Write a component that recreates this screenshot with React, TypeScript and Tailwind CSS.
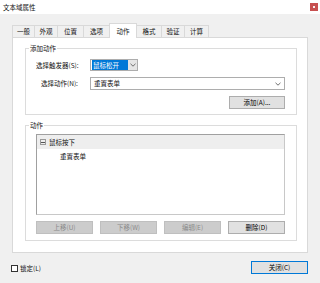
import React from "react";

const font = { fontFamily: '"Noto Sans CJK SC", "Noto Sans", sans-serif' };

const tabs: { label: string; w: string; active?: boolean }[] = [
  { label: "一般", w: "w-[23px]" },
  { label: "外观", w: "w-[24px]" },
  { label: "位置", w: "w-[27px]" },
  { label: "选项", w: "w-[27px]" },
  { label: "动作", w: "w-[28px]", active: true },
  { label: "格式", w: "w-[26px]" },
  { label: "验证", w: "w-[24px]" },
  { label: "计算", w: "w-[25px]" },
];

function Btn({ label, disabled, primary, w = "w-[57px]" }: { label: string; disabled?: boolean; primary?: boolean; w?: string }) {
  const cls = disabled
    ? "bg-[#cccccc] border-[#bfbfbf] text-[#8a8a8a]"
    : primary
    ? "bg-[#e1e1e1] border-[#0078d7] text-black"
    : "bg-[#e1e1e1] border-[#adadad] text-black";
  return (
    <div className={`${w} h-[13px] border flex items-center justify-center text-[6.5px] leading-none ${cls}`}>
      {label}
    </div>
  );
}

function Chevron() {
  return (
    <svg width="6" height="4" viewBox="0 0 6 4">
      <path d="M0.5 0.8 L3 3.2 L5.5 0.8" fill="none" stroke="#606060" strokeWidth="0.9" />
    </svg>
  );
}

export default function App() {
  return (
    <div className="w-[320px] h-[283px] bg-[#f0f0f0] flex flex-col overflow-hidden text-[#111]" style={font}>
      {/* title bar */}
      <div className="h-[14px] bg-white flex items-center justify-between pl-[3px] pr-[2px] shrink-0">
        <span className="text-[6.5px] leading-none">文本域属性</span>
        <div className="w-[8px] h-[8px] bg-[#c75050] flex items-center justify-center">
          <div className="w-[2px] h-[2px] bg-white/90" />
        </div>
      </div>

      {/* tabs */}
      <div className="mt-[9px] h-[14px] pl-[12px] flex items-end relative z-10 shrink-0">
        {tabs.map((t, i) => (
          <div
            key={t.label}
            className={`${t.w} ${i > 0 ? "-ml-px" : ""} border border-b-0 border-[#d9d9d9] flex items-center justify-center text-[6.5px] leading-none ${
              t.active ? "h-[15px] -mb-px bg-white relative z-10" : "h-[12px] bg-[#f0f0f0]"
            }`}
          >
            {t.label}
          </div>
        ))}
      </div>

      {/* panel */}
      <div className="ml-[12px] w-[296px] h-[216px] border border-[#d9d9d9] bg-white shrink-0 flex flex-col px-[12px] pt-[5px]">
        {/* group 1 */}
        <fieldset className="w-[272px] h-[72px] border border-[#dcdcdc] flex flex-col">
          <legend className="ml-[3px] px-[1px] text-[6.5px] leading-[10px]">添加动作</legend>
          <div className="mt-[6px] flex items-center h-[12px]">
            <span className="ml-[10px] w-[54px] text-[6.5px] leading-none">选择触发器(S):</span>
            <div className="w-[48px] h-[12px] border border-[#adadad] bg-white flex items-center">
              <span className="ml-px h-[10px] w-[36px] bg-[#0078d7] text-white text-[6.5px] leading-[10px] pl-[1px]">鼠标松开</span>
              <div className="flex-1 h-[10px] bg-[#e5e5e5] flex items-center justify-center">
                <Chevron />
              </div>
            </div>
          </div>
          <div className="mt-[6px] flex items-center h-[13px]">
            <span className="ml-[15px] w-[49px] text-[6.5px] leading-none">选择动作(N):</span>
            <div className="w-[195px] h-[13px] border border-[#adadad] bg-white flex items-center justify-between pl-[3px] pr-[3px]">
              <span className="text-[6.5px] leading-none">重置表单</span>
              <Chevron />
            </div>
          </div>
          <div className="mt-[6px] flex justify-end pr-[11px]">
            <Btn label="添加(A)..." w="w-[56px]" />
          </div>
        </fieldset>

        {/* group 2 */}
        <fieldset className="mt-[5px] w-[272px] h-[121px] border border-[#dcdcdc] flex flex-col">
          <legend className="ml-[3px] px-[1px] text-[6.5px] leading-[10px]">动作</legend>
          <div className="mt-[4px] ml-[10px] w-[249px] h-[81px] border border-[#a0a0a0] border-r-[#c8c8c8] border-b-[#c8c8c8] bg-white flex flex-col">
            <div className="h-[14px] bg-[#eeeeee] flex items-center pl-[3px]">
              <span className="w-[6px] h-[6px] border border-[#9a9a9a] flex items-center justify-center">
                <span className="w-[4px] h-px bg-[#555]" />
              </span>
              <span className="ml-[3px] text-[6.5px] leading-none">鼠标按下</span>
            </div>
            <div className="h-[15px] flex items-center pl-[23px]">
              <span className="text-[6.5px] leading-none">重置表单</span>
            </div>
          </div>
          <div className="mt-[6px] ml-[10px] flex gap-[7px]">
            <Btn label="上移(U)" disabled />
            <Btn label="下移(W)" disabled />
            <Btn label="编辑(E)" disabled />
            <Btn label="删除(D)" />
          </div>
        </fieldset>
      </div>

      {/* bottom */}
      <div className="flex items-center justify-between mt-[8px] pl-[11px] pr-[12px]">
        <div className="flex items-center gap-[2px] mt-[2px]">
          <div className="w-[7px] h-[7px] border border-[#333] bg-white" />
          <span className="text-[6.5px] leading-none">锁定(L)</span>
        </div>
        <Btn label="关闭(C)" primary w="w-[57px]" />
      </div>
    </div>
  );
}
